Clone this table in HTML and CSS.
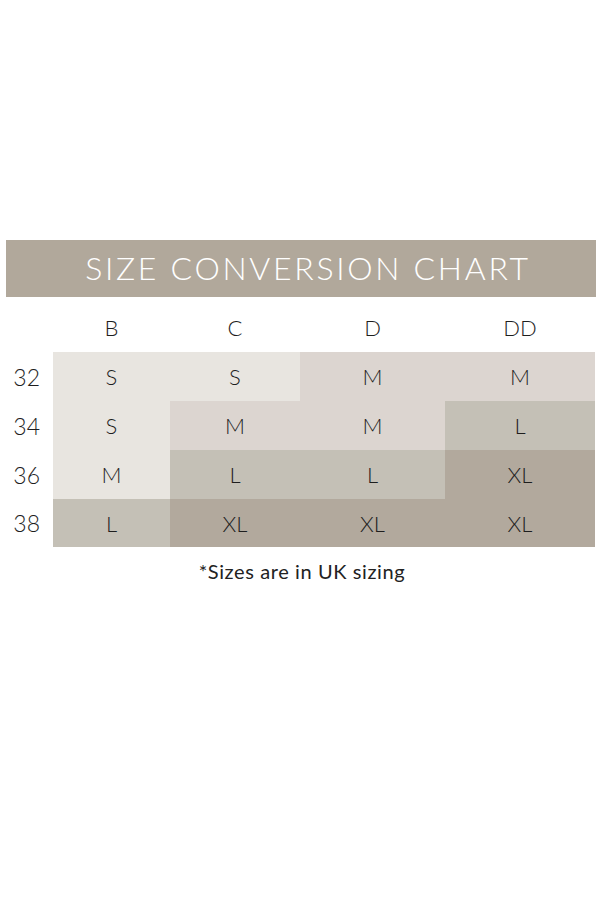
FILE: index.html
```html
<!DOCTYPE html>
<html>
<head>
<meta charset="utf-8">
<link rel="stylesheet" href="styles.css">
</head>
<body>
<div class="page">
  <div class="title">SIZE CONVERSION CHART</div>
  <div class="chart">
    <div class="corner"></div>
    <div class="cup">B</div>
    <div class="cup">C</div>
    <div class="cup">D</div>
    <div class="cup">DD</div>

    <div class="band">32</div>
    <div class="cell s">S</div>
    <div class="cell s">S</div>
    <div class="cell m">M</div>
    <div class="cell m">M</div>

    <div class="band">34</div>
    <div class="cell s">S</div>
    <div class="cell m">M</div>
    <div class="cell m">M</div>
    <div class="cell l">L</div>

    <div class="band">36</div>
    <div class="cell s">M</div>
    <div class="cell l">L</div>
    <div class="cell l">L</div>
    <div class="cell xl">XL</div>

    <div class="band">38</div>
    <div class="cell l">L</div>
    <div class="cell xl">XL</div>
    <div class="cell xl">XL</div>
    <div class="cell xl">XL</div>
  </div>
  <div class="note">*Sizes are in UK sizing</div>
</div>
</body>
</html>
```
FILE: styles.css
```css
html, body {
  margin: 0;
  padding: 0;
  background: #ffffff;
}
.page {
  width: 600px;
  height: 900px;
  padding-top: 240px;
  box-sizing: border-box;
  font-family: Lato, "Noto Sans", sans-serif;
  color: #2a2a2a;
}
.title {
  margin: 0 4px 0 6px;
  height: 57px;
  background: #b1a89b;
  color: #ffffff;
  font-weight: 300;
  font-size: 32px;
  letter-spacing: 2.7px;
  display: flex;
  align-items: center;
  justify-content: center;
  padding-bottom: 3px;
  padding-left: 14px;
  box-sizing: border-box;
}
.chart {
  display: grid;
  grid-template-columns: 53px 117px 130px 145px 150px;
  grid-template-rows: 55px 49px 49px 49px 48px;
}
.cup, .cell, .band {
  display: flex;
  align-items: center;
  font-size: 22px;
  font-weight: 300;
  color: #1e1e1e;
}
.cup, .cell {
  justify-content: center;
}
.cup {
  padding-top: 5px;
  box-sizing: border-box;
}
.band {
  justify-content: flex-end;
  padding-right: 13px;
  font-size: 23px;
}
.s { background: #e8e5e0; }
.m { background: #dcd5d0; }
.l { background: #c4c0b6; }
.xl { background: #b2a99d; }
.note {
  text-align: center;
  font-size: 20px;
  letter-spacing: 0.6px;
  margin-top: 12px;
  padding-left: 4px;
  color: #222;
}
```
